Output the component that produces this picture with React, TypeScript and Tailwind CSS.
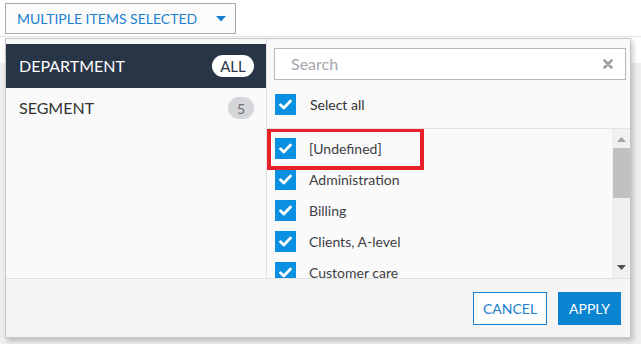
import React from "react";

const items = ["[Undefined]", "Administration", "Billing", "Clients, A-level", "Customer care"];

function Check() {
  return (
    <span className="flex items-center justify-center w-[21px] h-[21px] bg-[#0b8fe0] shrink-0">
      <svg width="13" height="11" viewBox="0 0 13 11">
        <path d="M1.5 5.8 L4.8 9 L11.5 2" fill="none" stroke="#fff" strokeWidth="2.8" strokeLinecap="round" strokeLinejoin="round" />
      </svg>
    </span>
  );
}

function App() {
  return (
    <div className="relative w-[641px] h-[344px] overflow-hidden bg-white font-['Lato',sans-serif]">
      {/* top bar */}
      <div className="h-[37px] border-b border-[#e3e3e3] pt-[3px] pl-[5px]">
        <button className="flex items-center justify-between w-[231px] h-[31px] border border-[#a5a9b0] bg-[#fbfbfb] pl-[11px] pr-[9px] text-[14px] text-[#1b7fcf]">
          <span>MULTIPLE ITEMS SELECTED</span>
          <svg width="10" height="6" viewBox="0 0 10 6">
            <path d="M0 0 H10 L5 5.5 Z" fill="#1b7fcf" />
          </svg>
        </button>
      </div>
      <div className="h-[26px]" />
      <div className="h-[281px] bg-[#efefef]" />

      {/* dropdown panel */}
      <div className="absolute left-[5px] top-[38px] w-[626px] h-[300px] flex flex-col border border-[#c6c6c6] bg-[#f9f9f9] shadow-[2px_3px_5px_rgba(0,0,0,0.22)]">
        <div className="flex h-[239px]">
          {/* left column */}
          <div className="w-[261px] pt-[5px] border-r border-[#e1e1e1] flex flex-col">
            <div className="flex items-center justify-between h-[44px] bg-[#283546] pl-[13px] pr-[12px]">
              <span className="text-[16px] text-white">DEPARTMENT</span>
              <span className="flex items-center justify-center w-[42px] h-[22px] rounded-full bg-white text-[15px] text-[#283546]">ALL</span>
            </div>
            <div className="flex items-center justify-between h-[40px] pl-[13px] pr-[12px]">
              <span className="text-[16px] text-[#333]">SEGMENT</span>
              <span className="flex items-center justify-center w-[26px] h-[22px] rounded-full bg-[#d5d6d9] text-[14px] text-[#6d6f74]">5</span>
            </div>
          </div>

          {/* right column */}
          <div className="flex-1 flex flex-col">
            <div className="pt-[9px] pl-[7px] pr-[4px]">
              <div className="flex items-center justify-between h-[32px] border border-[#b3b7be] bg-white pl-[16px] pr-[12px]">
                <span className="text-[16px] text-[#a4a7ad]">Search</span>
                <svg width="10" height="10" viewBox="0 0 10 10">
                  <path d="M1.5 1.5 L8.5 8.5 M8.5 1.5 L1.5 8.5" stroke="#9a9ea6" strokeWidth="2.6" strokeLinecap="round" />
                </svg>
              </div>
            </div>
            <div className="flex items-center gap-[14px] h-[47px] mt-[1px] pl-[8px]">
              <Check />
              <span className="text-[14px] text-[#333]">Select all</span>
            </div>
            <div className="relative flex flex-1 border-t border-[#e4e4e4] bg-[#fafafa] overflow-hidden">
              <div className="flex-1 pt-[4px]">
                {items.map((t) => (
                  <div key={t} className="flex items-center gap-[13px] h-[31px] pl-[8px]">
                    <Check />
                    <span className="text-[14px] text-[#3e3e45]">{t}</span>
                  </div>
                ))}
              </div>
              <div className="w-[18px] bg-[#f0f0f0] flex flex-col items-center">
                <svg className="mt-[8px]" width="9" height="5" viewBox="0 0 9 5">
                  <path d="M0 5 H9 L4.5 0 Z" fill="#a3a3a3" />
                </svg>
                <div className="w-[17px] h-[50px] mt-[6px] bg-[#c1c1c1]" />
                <svg className="mt-auto mb-[8px]" width="9" height="5" viewBox="0 0 9 5">
                  <path d="M0 0 H9 L4.5 5 Z" fill="#505050" />
                </svg>
              </div>
              {/* highlight annotation */}
              <div className="absolute left-0 top-[-1px] w-[157px] h-[42px] border-4 border-[#e8202a]" />
            </div>
          </div>
        </div>

        {/* footer */}
        <div className="flex-1 flex items-center justify-end gap-[11px] pr-[9px] border-t border-[#e1e1e1] bg-[#f5f5f5]">
          <button className="h-[33px] w-[74px] border border-[#1b7fcf] bg-white text-[14px] text-[#1b7fcf]">CANCEL</button>
          <button className="h-[33px] w-[63px] bg-[#0a84d0] text-[14px] text-white">APPLY</button>
        </div>
      </div>
    </div>
  );
}

export default App;
